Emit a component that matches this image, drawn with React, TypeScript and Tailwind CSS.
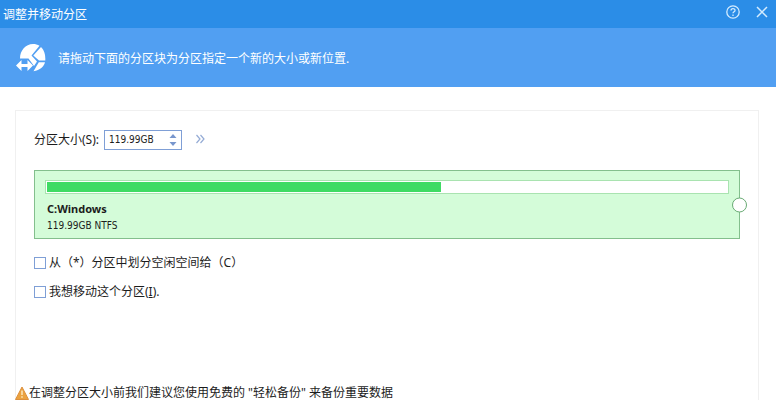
import React, { useState } from 'react';

interface CheckOptionProps {
  id: string;
  checked: boolean;
  onChange: (checked: boolean) => void;
  children: React.ReactNode;
}

const CheckOption: React.FC<CheckOptionProps> = ({ id, checked, onChange, children }) => {
  return (
    <div className="flex items-center gap-[3px]">
      <input
        type="checkbox"
        id={id}
        checked={checked}
        onChange={(e) => onChange(e.target.checked)}
        className="size-3 shrink-0 appearance-none border border-[#7f9fd6] bg-white checked:bg-[#2d8de8]"
      />
      <label htmlFor={id}>{children}</label>
    </div>
  );
};

const PartitionIcon: React.FC = () => (
  <svg className="h-7 w-[30px] shrink-0" viewBox="0 0 30 28" fill="#fff" aria-hidden="true">
    <path d="M4 14.500C4 6.500 9.500 0 17 0c2.500 0 4.600.6 6.500 1.800L15.500 11.500l5.500 6-3 4.500-5.500-7.500z" />
    <path d="M25 3C28 6 29.500 10 29.300 16.500H23l-5.700-5z" />
    <path d="M22.800 18.200H29C28 22.500 24 26 17.500 27.300z" />
    <path d="M0 21.500L5.500 16v4h6v-4L17 21.500 11.500 27v-4h-6v4z" />
  </svg>
);

const WarningIcon: React.FC = () => (
  <svg className="size-3.5 shrink-0" viewBox="0 0 14 14" aria-hidden="true">
    <path d="M7 1L13.500 13.500H.5z" fill="#eba23f" stroke="#dc8f3c" strokeLinejoin="round" />
    <path d="M7 4.500v4.500M7 10.300v1.500" stroke="#fff2cf" strokeWidth="1.300" />
  </svg>
);

const App: React.FC = () => {
  const [size, setSize] = useState<number>(119.99);
  const [allocate, setAllocate] = useState<boolean>(false);
  const [move, setMove] = useState<boolean>(false);

  const step = (amount: number) => setSize((value) => Math.max(0, value + amount));

  return (
    <div className="flex h-screen flex-col overflow-hidden bg-white font-['Noto_Sans','Noto_Sans_CJK_SC',sans-serif] text-xs text-[#1c1c1c]">
      <header className="flex h-7 shrink-0 items-center justify-between bg-[#2b8de7] pr-2 pl-[3px] text-white">
        <h1 className="pt-0.5">调整并移动分区</h1>
        <div className="flex items-center gap-4 pb-1 text-[#d3ecff]">
          <button type="button" aria-label="帮助">
            <svg className="size-3.5" viewBox="0 0 14 14" fill="none" stroke="currentColor" strokeWidth="1.300">
              <circle cx="7" cy="7" r="6.200" />
              <path d="M5 5.500C5 3 9 3 9 5.400 9 6.800 7 6.800 7 8.300M7 9.500V11" />
            </svg>
          </button>
          <button type="button" aria-label="关闭">
            <svg className="size-3" viewBox="0 0 12 12" fill="none" stroke="currentColor" strokeWidth="1.500">
              <path d="M1 1l10 10M11 1L1 11" />
            </svg>
          </button>
        </div>
      </header>

      <div className="flex h-[59px] shrink-0 items-center gap-3 bg-[#519ff2] pl-4 text-white">
        <PartitionIcon />
        <p className="pt-0.5">请拖动下面的分区块为分区指定一个新的大小或新位置.</p>
      </div>

      <main className="mt-[23px] mr-[17px] ml-[15px] flex flex-1 flex-col border border-b-0 border-[#f0f0f0]">
        <div className="pt-[19px] pr-[18px] pl-[18px]">
          <div className="flex h-5 items-center">
            <label htmlFor="size">分区大小(S):</label>
            <div className="ml-[5px] flex h-5 w-[78px] items-center border border-[#7f9fd6] bg-white pr-1">
              <input
                id="size"
                type="text"
                value={`${size.toFixed(2)}GB`}
                onChange={(e) => setSize(parseFloat(e.target.value) || 0)}
                className="w-full min-w-0 flex-1 pl-1 font-['DejaVu_Sans_Condensed','DejaVu_Sans',sans-serif] text-[10px] outline-none"
              />
              <div className="flex flex-col gap-1 text-[#7896cd]">
                <button type="button" aria-label="增加" onClick={() => step(1)}>
                  <svg className="block h-1 w-2" viewBox="0 0 8 4" fill="currentColor">
                    <path d="M4 0l3.500 4h-7z" />
                  </svg>
                </button>
                <button type="button" aria-label="减少" onClick={() => step(-1)}>
                  <svg className="block h-1 w-2" viewBox="0 0 8 4" fill="currentColor">
                    <path d="M.5 0h7L4 4z" />
                  </svg>
                </button>
              </div>
            </div>
            <button type="button" aria-label="展开" className="ml-3.5 pb-0.5 text-[#94abd5]">
              <svg className="block h-2.5 w-[9px]" viewBox="0 0 9 10" fill="none" stroke="currentColor" strokeWidth="1.200">
                <path d="M.5 1l3.500 4-3.500 4M4.500 1L8 5 4.500 9" />
              </svg>
            </button>
          </div>

          <section className="relative mt-5 h-[69px] border border-[#83bf8d] bg-[#d4fcd9] px-2.5 pt-[9px]">
            <div className="h-3.5 border border-[#a9e3b0] bg-white p-px">
              <div className="h-full w-[58%] bg-[#3fdb64]" />
            </div>
            <div className="flex flex-col gap-px pt-[7px] pl-0.5">
              <h2 className="text-[11px]/4 font-bold">C:Windows</h2>
              <p className="font-['DejaVu_Sans_Condensed','DejaVu_Sans',sans-serif] text-[10px]/4">119.99GB NTFS</p>
            </div>
            <button
              type="button"
              aria-label="拖动以调整分区大小"
              className="absolute top-1/2 -right-2 size-[15px] -translate-y-1/2 rounded-full border border-[#69ab74] bg-white"
            />
          </section>

          <div className="mt-4 flex flex-col gap-[13px]">
            <CheckOption id="allocate" checked={allocate} onChange={setAllocate}>
              从（*）分区中划分空闲空间给（C）
            </CheckOption>
            <CheckOption id="move" checked={move} onChange={setMove}>
              我想移动这个分区(<u>I</u>).
            </CheckOption>
          </div>
        </div>

        <footer className="mt-auto -ml-px flex shrink-0 items-center text-xs/[14px]">
          <WarningIcon />
          <p>在调整分区大小前我们建议您使用免费的 "轻松备份" 来备份重要数据</p>
        </footer>
      </main>
    </div>
  );
};

export default App;
